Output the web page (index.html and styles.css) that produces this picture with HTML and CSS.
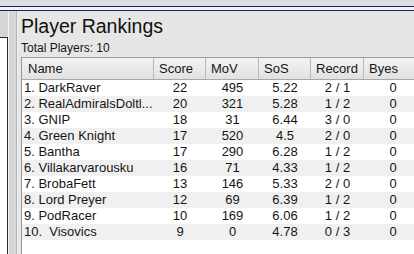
FILE: index.html
```html
<!DOCTYPE html>
<html>
<head>
<meta charset="utf-8">
<link rel="stylesheet" href="styles.css">
</head>
<body>
<div class="app">
  <div class="topband"></div>
  <div class="menuline"></div>
  <div class="main">
    <div class="leftpanel"><div class="leftbox"></div></div>
    <div class="splitter"></div>
    <div class="content">
      <div class="title">Player Rankings</div>
      <div class="total">Total Players: 10</div>
      <div class="table">
        <div class="row head">
          <div class="c name">Name</div>
          <div class="c">Score</div>
          <div class="c">MoV</div>
          <div class="c">SoS</div>
          <div class="c">Record</div>
          <div class="c">Byes</div>
        </div>
        <div class="row"><div class="c name">1. DarkRaver</div><div class="c">22</div><div class="c">495</div><div class="c">5.22</div><div class="c">2 / 1</div><div class="c">0</div></div>
        <div class="row alt"><div class="c name">2. RealAdmiralsDoltl...</div><div class="c">20</div><div class="c">321</div><div class="c">5.28</div><div class="c">1 / 2</div><div class="c">0</div></div>
        <div class="row"><div class="c name">3. GNIP</div><div class="c">18</div><div class="c">31</div><div class="c">6.44</div><div class="c">3 / 0</div><div class="c">0</div></div>
        <div class="row alt"><div class="c name">4. Green Knight</div><div class="c">17</div><div class="c">520</div><div class="c">4.5</div><div class="c">2 / 0</div><div class="c">0</div></div>
        <div class="row"><div class="c name">5. Bantha</div><div class="c">17</div><div class="c">290</div><div class="c">6.28</div><div class="c">1 / 2</div><div class="c">0</div></div>
        <div class="row alt"><div class="c name">6. Villakarvarousku</div><div class="c">16</div><div class="c">71</div><div class="c">4.33</div><div class="c">1 / 2</div><div class="c">0</div></div>
        <div class="row"><div class="c name">7. BrobaFett</div><div class="c">13</div><div class="c">146</div><div class="c">5.33</div><div class="c">2 / 0</div><div class="c">0</div></div>
        <div class="row alt"><div class="c name">8. Lord Preyer</div><div class="c">12</div><div class="c">69</div><div class="c">6.39</div><div class="c">1 / 2</div><div class="c">0</div></div>
        <div class="row"><div class="c name">9. PodRacer</div><div class="c">10</div><div class="c">169</div><div class="c">6.06</div><div class="c">1 / 2</div><div class="c">0</div></div>
        <div class="row alt"><div class="c name">10.&nbsp; Visovics</div><div class="c">9</div><div class="c">0</div><div class="c">4.78</div><div class="c">0 / 3</div><div class="c">0</div></div>
      </div>
    </div>
  </div>
</div>
</body>
</html>
```
FILE: styles.css
```css
html, body {
  margin: 0;
  padding: 0;
}
body {
  width: 414px;
  height: 254px;
  overflow: hidden;
  font-family: "Liberation Sans", Arial, sans-serif;
  color: #151515;
  background: #e4e4e4;
}
.app {
  display: flex;
  flex-direction: column;
  height: 254px;
}
.topband {
  height: 6px;
  background: #dadee5;
}
.menuline {
  height: 3px;
  border-top: 1px solid #1c2a48;
  border-bottom: 1px solid #1c2a48;
  background: #eef1f6;
}
.main {
  flex: 1;
  display: flex;
  min-height: 0;
}
.leftpanel {
  width: 8px;
  background: #d6d6d6;
  padding-top: 26px;
  display: flex;
  flex-direction: column;
}
.leftbox {
  flex: 1;
  width: 7px;
  background: #ffffff;
  border-top: 1px solid #2b2b2b;
  border-right: 1px solid #2b2b2b;
}
.splitter {
  width: 7px;
  background: #d6d6d6;
  border-left: 1px solid #f4f4f4;
  border-right: 1px solid #b4b4b4;
}
.content {
  flex: 1;
  min-width: 0;
  background: #e6e6e6;
  padding: 4px 0 0 3px;
  display: flex;
  flex-direction: column;
  border-left: 1px solid #f2f2f2;
}
.title {
  font-size: 19.5px;
  line-height: 23px;
  color: #111;
}
.total {
  font-size: 12px;
  line-height: 14px;
  margin-top: 3px;
}
.table {
  margin-top: 2px;
  flex: 1;
  background: #ffffff;
  border-top: 1px solid #9a9a9a;
  border-left: 1px solid #9a9a9a;
  width: 400px;
}
.row {
  display: grid;
  grid-template-columns: 132px 52px 53px 52px 53px 58px;
  height: 16px;
  font-size: 13px;
  line-height: 16px;
}
.row.alt {
  background: #f0f0f0;
}
.row .c {
  text-align: center;
  white-space: nowrap;
  overflow: hidden;
}
.row .c.name {
  text-align: left;
  padding-left: 2px;
}
.row.head {
  height: 21px;
  line-height: 21px;
  background: linear-gradient(#f3f3f3, #e1e1e1);
  border-bottom: 1px solid #a8a8a8;
}
.row.head .c {
  text-align: left;
  padding-left: 5px;
  border-right: 1px solid #b9b9b9;
}
.row.head .c.name {
  padding-left: 6px;
}
```
